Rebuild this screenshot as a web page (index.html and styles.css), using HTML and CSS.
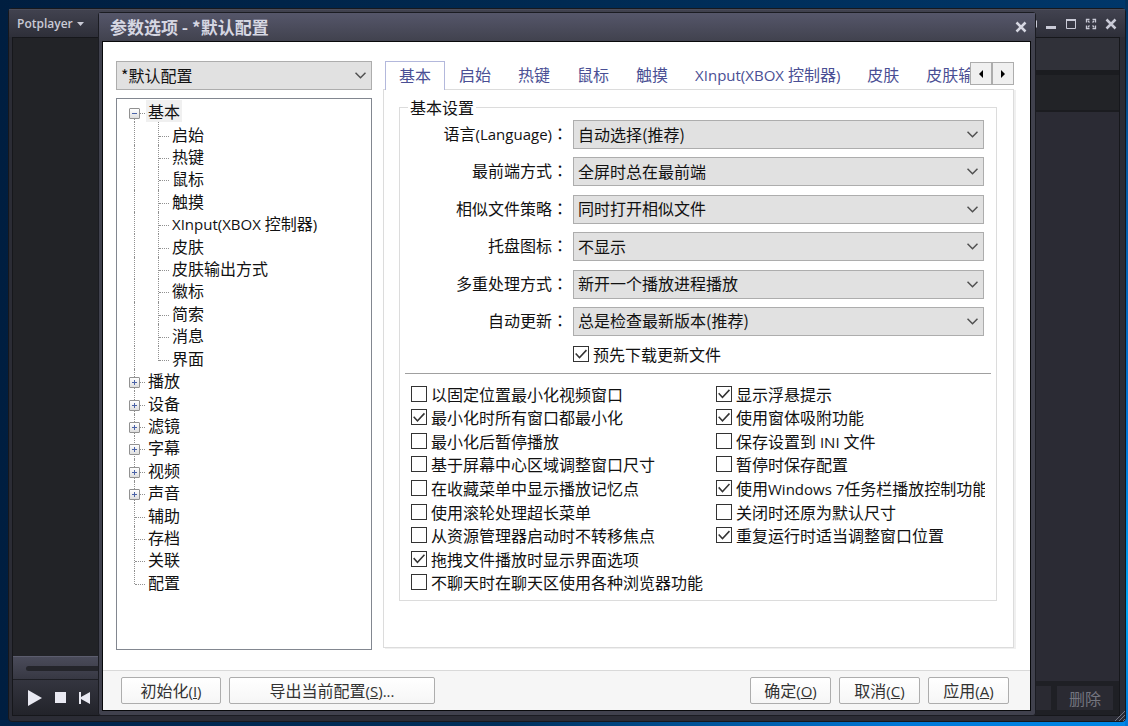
FILE: index.html
```html
<!DOCTYPE html>
<html lang="zh-CN">
<head>
<meta charset="utf-8">
<title>参数选项</title>
<link rel="stylesheet" href="styles.css">
</head>
<body>
<main class="desktop">
  <section class="player" aria-label="Potplayer">
    <header class="player-bar">
      <button class="player-menu" type="button">Potplayer<svg width="7" height="4" viewBox="0 0 7 4"><path d="M0 0h7L3.500 4z" fill="currentColor"/></svg></button>
      <div class="player-tools">
        <button type="button" aria-label="置顶"><svg width="12" height="12" viewBox="0 0 12 12"><path d="M2 3.500h9v5H2z" fill="none" stroke="currentColor" stroke-width="2"/></svg></button>
        <button type="button" aria-label="最小化"><svg width="12" height="12" viewBox="0 0 12 12"><path d="M1 9.500h10" stroke="currentColor" stroke-width="3"/></svg></button>
        <button type="button" aria-label="最大化"><svg width="12" height="12" viewBox="0 0 12 12"><path d="M1.500 2v8.500h9V2" fill="none" stroke="currentColor"/><path d="M1 2h10" stroke="currentColor" stroke-width="2"/></svg></button>
        <button type="button" aria-label="全屏"><svg width="12" height="12" viewBox="0 0 12 12" fill="none" stroke="currentColor" stroke-width="1.300"><path d="M1.500 4.500v-3h3M7.500 1.500h3v3M10.500 7.500v3h-3M4.500 10.500h-3v-3M3 3l1.500 1.500M9 3 7.500 4.500M9 9 7.500 7.500M3 9l1.500-1.500"/></svg></button>
        <button type="button" aria-label="关闭"><svg width="12" height="12" viewBox="0 0 12 12"><path d="m1.500 1.500 9 9m0-9-9 9" stroke="currentColor" stroke-width="2.500"/></svg></button>
      </div>
    </header>
    <div class="player-body">
      <div class="stage">
        <div class="video"></div>
        <div class="seek"><div class="track"></div></div>
        <div class="controls">
          <button type="button" aria-label="播放"><svg width="14" height="16" viewBox="0 0 14 16"><path d="M0 0v16L14 8z" fill="currentColor"/></svg></button>
          <button type="button" aria-label="停止"><svg width="11" height="11" viewBox="0 0 11 11"><path d="M0 0h11v11H0z" fill="currentColor"/></svg></button>
          <button type="button" aria-label="上一个"><svg width="11" height="12" viewBox="0 0 11 12"><path d="M0 0h2v5l9-5v12L2 7v5H0z" fill="currentColor"/></svg></button>
        </div>
      </div>
      <aside class="playlist">
        <div class="playlist-tabs"></div>
        <div class="playlist-head"></div>
        <div class="playlist-items"></div>
        <div class="playlist-foot"><button type="button" aria-label="添加"></button><button type="button">删除</button></div>
      </aside>
    </div>
    <svg class="grip" width="10" height="10" viewBox="0 0 10 10"><path d="M0 10 10 0M4 10l6-6M8 10l2-2" stroke="#777885"/></svg>
  </section>

  <section class="dialog" role="dialog" aria-labelledby="dialog-title">
    <header class="dialog-bar">
      <h1 id="dialog-title">参数选项 - *默认配置</h1>
      <button type="button" aria-label="关闭"><svg width="12" height="12" viewBox="0 0 12 12"><path d="m1.500 1.500 9 9m0-9-9 9" stroke="currentColor" stroke-width="2.500"/></svg></button>
    </header>
    <div class="dialog-content">
      <div class="dialog-body">
        <div class="sidebar">
          <div class="pick">
            <select aria-label="配置"><option>*默认配置</option></select>
            <svg width="11" height="7" viewBox="0 0 11 7"><path d="m.5.700 5 5 5-5"/></svg>
          </div>
          <ul class="tree" role="tree">
            <li class="node open first" role="treeitem" aria-level="1" aria-expanded="true"><button class="toggle" type="button" aria-label="折叠"></button><span class="selected">基本</span></li>
            <li class="node child" role="treeitem" aria-level="2"><span>启始</span></li>
            <li class="node child" role="treeitem" aria-level="2"><span>热键</span></li>
            <li class="node child" role="treeitem" aria-level="2"><span>鼠标</span></li>
            <li class="node child" role="treeitem" aria-level="2"><span>触摸</span></li>
            <li class="node child" role="treeitem" aria-level="2"><span><span class="latin">XInput(XBOX </span>控制器<span class="latin">)</span></span></li>
            <li class="node child" role="treeitem" aria-level="2"><span>皮肤</span></li>
            <li class="node child" role="treeitem" aria-level="2"><span>皮肤输出方式</span></li>
            <li class="node child" role="treeitem" aria-level="2"><span>徽标</span></li>
            <li class="node child" role="treeitem" aria-level="2"><span>简索</span></li>
            <li class="node child" role="treeitem" aria-level="2"><span>消息</span></li>
            <li class="node child child-last" role="treeitem" aria-level="2"><span>界面</span></li>
            <li class="node" role="treeitem" aria-level="1" aria-expanded="false"><button class="toggle" type="button" aria-label="展开"></button><span>播放</span></li>
            <li class="node" role="treeitem" aria-level="1" aria-expanded="false"><button class="toggle" type="button" aria-label="展开"></button><span>设备</span></li>
            <li class="node" role="treeitem" aria-level="1" aria-expanded="false"><button class="toggle" type="button" aria-label="展开"></button><span>滤镜</span></li>
            <li class="node" role="treeitem" aria-level="1" aria-expanded="false"><button class="toggle" type="button" aria-label="展开"></button><span>字幕</span></li>
            <li class="node" role="treeitem" aria-level="1" aria-expanded="false"><button class="toggle" type="button" aria-label="展开"></button><span>视频</span></li>
            <li class="node" role="treeitem" aria-level="1" aria-expanded="false"><button class="toggle" type="button" aria-label="展开"></button><span>声音</span></li>
            <li class="node" role="treeitem" aria-level="1"><span>辅助</span></li>
            <li class="node" role="treeitem" aria-level="1"><span>存档</span></li>
            <li class="node" role="treeitem" aria-level="1"><span>关联</span></li>
            <li class="node last" role="treeitem" aria-level="1"><span>配置</span></li>
          </ul>
        </div>

        <div class="settings">
          <div class="tab-row">
            <div class="tabs" role="tablist">
              <button type="button" role="tab" aria-selected="true">基本</button>
              <button type="button" role="tab">启始</button>
              <button type="button" role="tab">热键</button>
              <button type="button" role="tab">鼠标</button>
              <button type="button" role="tab">触摸</button>
              <button type="button" role="tab"><span class="latin">XInput(XBOX </span>控制器<span class="latin">)</span></button>
              <button type="button" role="tab">皮肤</button>
              <button type="button" role="tab">皮肤输出方式</button>
            </div>
            <div class="scroller">
              <button type="button" aria-label="向左"><svg width="4" height="8" viewBox="0 0 4 8"><path d="M4 0v8L0 4z"/></svg></button>
              <button type="button" aria-label="向右"><svg width="4" height="8" viewBox="0 0 4 8"><path d="M0 0v8l4-4z"/></svg></button>
            </div>
          </div>
          <div class="pane" role="tabpanel">
            <fieldset>
              <legend>基本设置</legend>
              <div class="fields">
                <div class="field"><label for="lang">语言<span class="latin">(Language)</span><span class="colon" lang="zh-TW">：</span></label><div class="pick"><select id="lang"><option>自动选择(推荐)</option></select><svg width="11" height="7" viewBox="0 0 11 7"><path d="m.5.700 5 5 5-5"/></svg></div></div>
                <div class="field"><label for="top">最前端方式<span class="colon" lang="zh-TW">：</span></label><div class="pick"><select id="top"><option>全屏时总在最前端</option></select><svg width="11" height="7" viewBox="0 0 11 7"><path d="m.5.700 5 5 5-5"/></svg></div></div>
                <div class="field"><label for="similar">相似文件策略<span class="colon" lang="zh-TW">：</span></label><div class="pick"><select id="similar"><option>同时打开相似文件</option></select><svg width="11" height="7" viewBox="0 0 11 7"><path d="m.5.700 5 5 5-5"/></svg></div></div>
                <div class="field"><label for="tray">托盘图标<span class="colon" lang="zh-TW">：</span></label><div class="pick"><select id="tray"><option>不显示</option></select><svg width="11" height="7" viewBox="0 0 11 7"><path d="m.5.700 5 5 5-5"/></svg></div></div>
                <div class="field"><label for="multi">多重处理方式<span class="colon" lang="zh-TW">：</span></label><div class="pick"><select id="multi"><option>新开一个播放进程播放</option></select><svg width="11" height="7" viewBox="0 0 11 7"><path d="m.5.700 5 5 5-5"/></svg></div></div>
                <div class="field"><label for="update">自动更新<span class="colon" lang="zh-TW">：</span></label><div class="pick"><select id="update"><option>总是检查最新版本(推荐)</option></select><svg width="11" height="7" viewBox="0 0 11 7"><path d="m.5.700 5 5 5-5"/></svg></div></div>
              </div>
              <div class="download"><label class="check"><input type="checkbox" checked>预先下载更新文件</label></div>
              <hr>
              <div class="checks">
                <label class="check"><input type="checkbox">以固定位置最小化视频窗口</label>
                <label class="check"><input type="checkbox" checked>最小化时所有窗口都最小化</label>
                <label class="check"><input type="checkbox">最小化后暂停播放</label>
                <label class="check"><input type="checkbox">基于屏幕中心区域调整窗口尺寸</label>
                <label class="check"><input type="checkbox">在收藏菜单中显示播放记忆点</label>
                <label class="check"><input type="checkbox">使用滚轮处理超长菜单</label>
                <label class="check"><input type="checkbox">从资源管理器启动时不转移焦点</label>
                <label class="check"><input type="checkbox" checked>拖拽文件播放时显示界面选项</label>
                <label class="check"><input type="checkbox">不聊天时在聊天区使用各种浏览器功能</label>
                <label class="check"><input type="checkbox" checked>显示浮悬提示</label>
                <label class="check"><input type="checkbox" checked>使用窗体吸附功能</label>
                <label class="check"><input type="checkbox"><span>保存设置到<span class="latin"> INI </span>文件</span></label>
                <label class="check"><input type="checkbox">暂停时保存配置</label>
                <label class="check"><input type="checkbox" checked><span>使用<span class="latin">Windows 7</span>任务栏播放控制功能</span></label>
                <label class="check"><input type="checkbox">关闭时还原为默认尺寸</label>
                <label class="check"><input type="checkbox" checked>重复运行时适当调整窗口位置</label>
              </div>
            </fieldset>
          </div>
        </div>
      </div>
      <footer class="dialog-foot">
        <button class="medium" type="button">初始化<span class="latin">(<u>I</u>)</span></button>
        <button class="wide" type="button">导出当前配置<span class="latin">(<u>S</u>)...</span></button>
        <span class="spacer"></span>
        <button type="button">确定<span class="latin">(<u>O</u>)</span></button>
        <button type="button">取消<span class="latin">(<u>C</u>)</span></button>
        <button type="button">应用<span class="latin">(<u>A</u>)</span></button>
      </footer>
    </div>
  </section>
</main>
</body>
</html>
```
FILE: styles.css
```css
* { box-sizing: border-box; }

body {
  margin: 0;
  font: 16px/22px "Noto Sans CJK SC", sans-serif;
  color: #111;
}

button {
  padding: 0;
  border: 0;
  background: none;
  color: inherit;
  font: inherit;
}

.latin {
  font-family: "Open Sans", "Noto Sans CJK SC", sans-serif;
  font-size: 15px;
  line-height: 20px;
  white-space: pre;
}

.colon { font-family: "Noto Sans CJK TC", sans-serif; }

.desktop {
  position: relative;
  height: 100vh;
  min-height: 726px;
  overflow: hidden;
  background:
    linear-gradient(#04305a, #0557a0 20%, #0078dc 60%, #00a8f8 84%, #0078d8) right / 3px 100% no-repeat,
    linear-gradient(90deg, #00234a, #00305c 45%, #0078d8 80%, #0088e8) bottom / 100% 6px no-repeat,
    linear-gradient(90deg, #001e40, #002a52 50%, #00376a);
}

/* Player window */
.player {
  position: absolute;
  inset: 8px 2px 4px 8px;
  display: flex;
  flex-direction: column;
  padding: 0 5px 5px 3px;
  border: 1px solid #17181d;
  border-radius: 4px;
  background: #2b2c35;
}

.player-bar {
  display: flex;
  flex: none;
  justify-content: space-between;
  align-items: center;
  height: 28px;
  margin: 0 -5px 0 -3px;
  padding: 0 8px;
  border-top: 1px solid #4c4d5a;
  background: linear-gradient(#41424f, #2e2f39);
  color: #c9cad6;
}

.player-menu {
  display: flex;
  align-items: center;
  gap: 4px;
  font: 600 12px/20px "Open Sans", sans-serif;
}

.player-tools { display: flex; gap: 8px; }
.player-tools button, .dialog-bar button { display: flex; width: 12px; }

.player-body {
  display: flex;
  flex: 1;
  border: 1px solid #16171b;
}

.stage {
  display: flex;
  flex: 1;
  flex-direction: column;
}

.video { flex: 1; background: #222327; }

.seek {
  height: 24px;
  padding: 9px 0 9px 13px;
  border-top: 1px solid #5c5d6e;
  border-bottom: 1px solid #1d1e24;
  background: linear-gradient(#4a4b5a, #373843);
}

.track { height: 5px; border-radius: 3px; background: #24252b; }

.controls {
  display: flex;
  align-items: center;
  gap: 13px;
  height: 35px;
  padding-left: 15px;
  background: linear-gradient(#34353f, #22232a);
  color: #e9e9f2;
}

.controls button { display: flex; }

.playlist {
  display: flex;
  flex-direction: column;
  width: 130px;
  background: #1b1c20;
}

.playlist-tabs { height: 32px; margin-bottom: 5px; background: #303139; }
.playlist-head { height: 35px; margin-bottom: 2px; background: #222327; }
.playlist-items { flex: 1; background: #2b2b34; }

.playlist-foot {
  display: flex;
  justify-content: flex-end;
  gap: 6px;
  height: 34px;
  padding: 5px 6px;
  background: #1f2025;
}

.playlist-foot button {
  width: 57px;
  background: #2a2a32;
  color: #74757f;
}

.grip { position: absolute; right: 0; bottom: 0; }

/* Settings dialog */
.dialog {
  position: absolute;
  inset: 12px 92px 10px 98px;
  display: flex;
  flex-direction: column;
  padding: 0 4px 4px 3px;
  border: 1px solid #1b1c22;
  border-radius: 3px;
  background: #40414d;
}

.dialog-bar {
  display: flex;
  flex: none;
  justify-content: space-between;
  align-items: center;
  height: 28px;
  margin: 0 -4px 0 -3px;
  padding: 0 8px 0 11px;
  background: linear-gradient(#55566a, #41424e);
  color: #d6d7e2;
}

.dialog-bar h1 { margin: 0; font-size: 17px; font-weight: 700; }

.dialog-content {
  display: flex;
  flex: 1;
  flex-direction: column;
  min-height: 0;
  border: 1px solid #08090b;
  background: #fff;
}

.dialog-body {
  display: flex;
  flex: 1;
  gap: 11px;
  min-height: 0;
  padding: 19px 16px 20px 13px;
}

.sidebar {
  display: flex;
  flex-direction: column;
  gap: 8px;
  width: 256px;
}

.pick { display: grid; align-items: center; min-width: 0; }

.pick select {
  grid-area: 1 / 1;
  width: 100%;
  height: 29px;
  padding: 0 24px 2px 4px;
  border: 1px solid #adadad;
  border-radius: 0;
  appearance: none;
  background: #e1e1e1;
  color: #111;
  font: inherit;
}

.pick svg {
  grid-area: 1 / 1;
  justify-self: end;
  margin-right: 6px;
  fill: none;
  stroke: #505050;
  stroke-width: 1.5;
  pointer-events: none;
}

.tree {
  display: grid;
  flex: 1;
  grid-template-rows: repeat(22, minmax(0, 1fr));
  min-height: 0;
  margin: 0;
  padding: 1px 0 56px;
  border: 1px solid #828790;
  list-style: none;
}

.node {
  position: relative;
  display: flex;
  align-items: center;
  min-height: 0;
  padding-left: 29px;
}

.node > span { padding: 0 2px; }
.node > .selected { background: #f0f0f0; }

.node::before {
  content: "";
  position: absolute;
  inset: 0 auto 0 17px;
  border-left: 1px dotted #909090;
}

.node.first::before { top: 50%; }
.node.last::before { bottom: 9px; }

.node::after {
  content: "";
  position: absolute;
  top: calc(50% + 2px);
  left: 18px;
  width: 10px;
  border-top: 1px dotted #909090;
}

.child { padding-left: 53px; }
.child::after { left: 42px; }

.child > span::before {
  content: "";
  position: absolute;
  inset: 0 auto 0 41px;
  border-left: 1px dotted #909090;
}

.child-last > span::before { bottom: 8px; }

.toggle {
  position: absolute;
  z-index: 1;
  top: calc(50% - 3px);
  left: 12px;
  width: 11px;
  height: 11px;
  border: 1px solid #919191;
  border-radius: 1px;
  background:
    linear-gradient(#4b63a7, #4b63a7) center / 5px 1px no-repeat,
    linear-gradient(#4b63a7, #4b63a7) center / 1px 5px no-repeat,
    linear-gradient(#fff, #dedede);
}

.open .toggle {
  background:
    linear-gradient(#4b63a7, #4b63a7) center / 5px 1px no-repeat,
    linear-gradient(#fff, #dedede);
}

.settings {
  display: flex;
  flex: 1;
  flex-direction: column;
  min-width: 0;
  padding-bottom: 2px;
}

.tab-row { display: flex; padding-left: 2px; }

.tabs {
  display: flex;
  flex: 1;
  min-width: 0;
  margin-bottom: -1px;
  overflow: hidden;
  z-index: 1;
}

.tabs button {
  flex: none;
  height: 29px;
  padding: 0 13px 4px 14px;
  color: #4a4f94;
  white-space: nowrap;
}

.tabs [aria-selected="true"] {
  padding: 0 13px 3px;
  border: 1px solid #b3b8dc;
  border-bottom: 0;
  background: #fff;
}

.scroller { display: flex; height: 23px; margin-top: 1px; }

.scroller button {
  display: grid;
  place-items: center;
  width: 22px;
  border: 1px solid #adadad;
  background: #f0f0f0;
}

.pane {
  flex: 1;
  padding: 6px 16px 0 15px;
  border: 1px solid #dcdcdc;
  box-shadow: 2px 1px #f0f0f0;
}

fieldset {
  min-width: 0;
  margin: 0;
  padding: 2px 0 6px;
  border: 1px solid #dcdcdc;
}

legend { margin-left: 8px; padding: 0 2px; }

.fields {
  display: flex;
  flex-direction: column;
  justify-content: space-between;
  height: 216px;
  padding-right: 12px;
}

.field {
  display: grid;
  grid-template-columns: 168px 1fr;
  gap: 5px;
}

.field label { padding-top: 2px; text-align: right; }

.download { margin: 7px 0 8px 173px; }

.check {
  display: flex;
  align-items: center;
  gap: 4px;
  white-space: nowrap;
}

.check input {
  display: grid;
  flex: none;
  width: 16px;
  height: 16px;
  margin: 0;
  border: 1px solid #333;
  appearance: none;
  background: #fff;
}

.check input:checked::before {
  content: "";
  background: #333;
  clip-path: polygon(8% 50%, 16% 42%, 39% 68%, 85% 18%, 93% 26%, 39% 84%);
}

hr {
  height: 1px;
  margin: 0 5px 8px;
  border: 0;
  background: #a0a0a0;
}

.checks {
  display: grid;
  grid-auto-flow: column;
  grid-template-rows: repeat(9, 1fr);
  grid-template-columns: 305px minmax(0, 1fr);
  height: 212px;
  margin: 0 11px;
  overflow: hidden;
}

.dialog-foot {
  display: flex;
  flex: none;
  align-items: center;
  gap: 8px;
  height: 40px;
  padding: 0 21px 0 18px;
  border-top: 1px solid #d9d9d9;
  background: #f6f6f6;
}

.dialog-foot button {
  width: 81px;
  height: 27px;
  padding-bottom: 2px;
  border: 1px solid #adadad;
  border-radius: 2px;
  background: linear-gradient(#fff, #f6f6f6);
  color: #333;
}

.dialog-foot .medium { width: 100px; }
.dialog-foot .wide { width: 206px; }
.spacer { flex: 1; }
```
